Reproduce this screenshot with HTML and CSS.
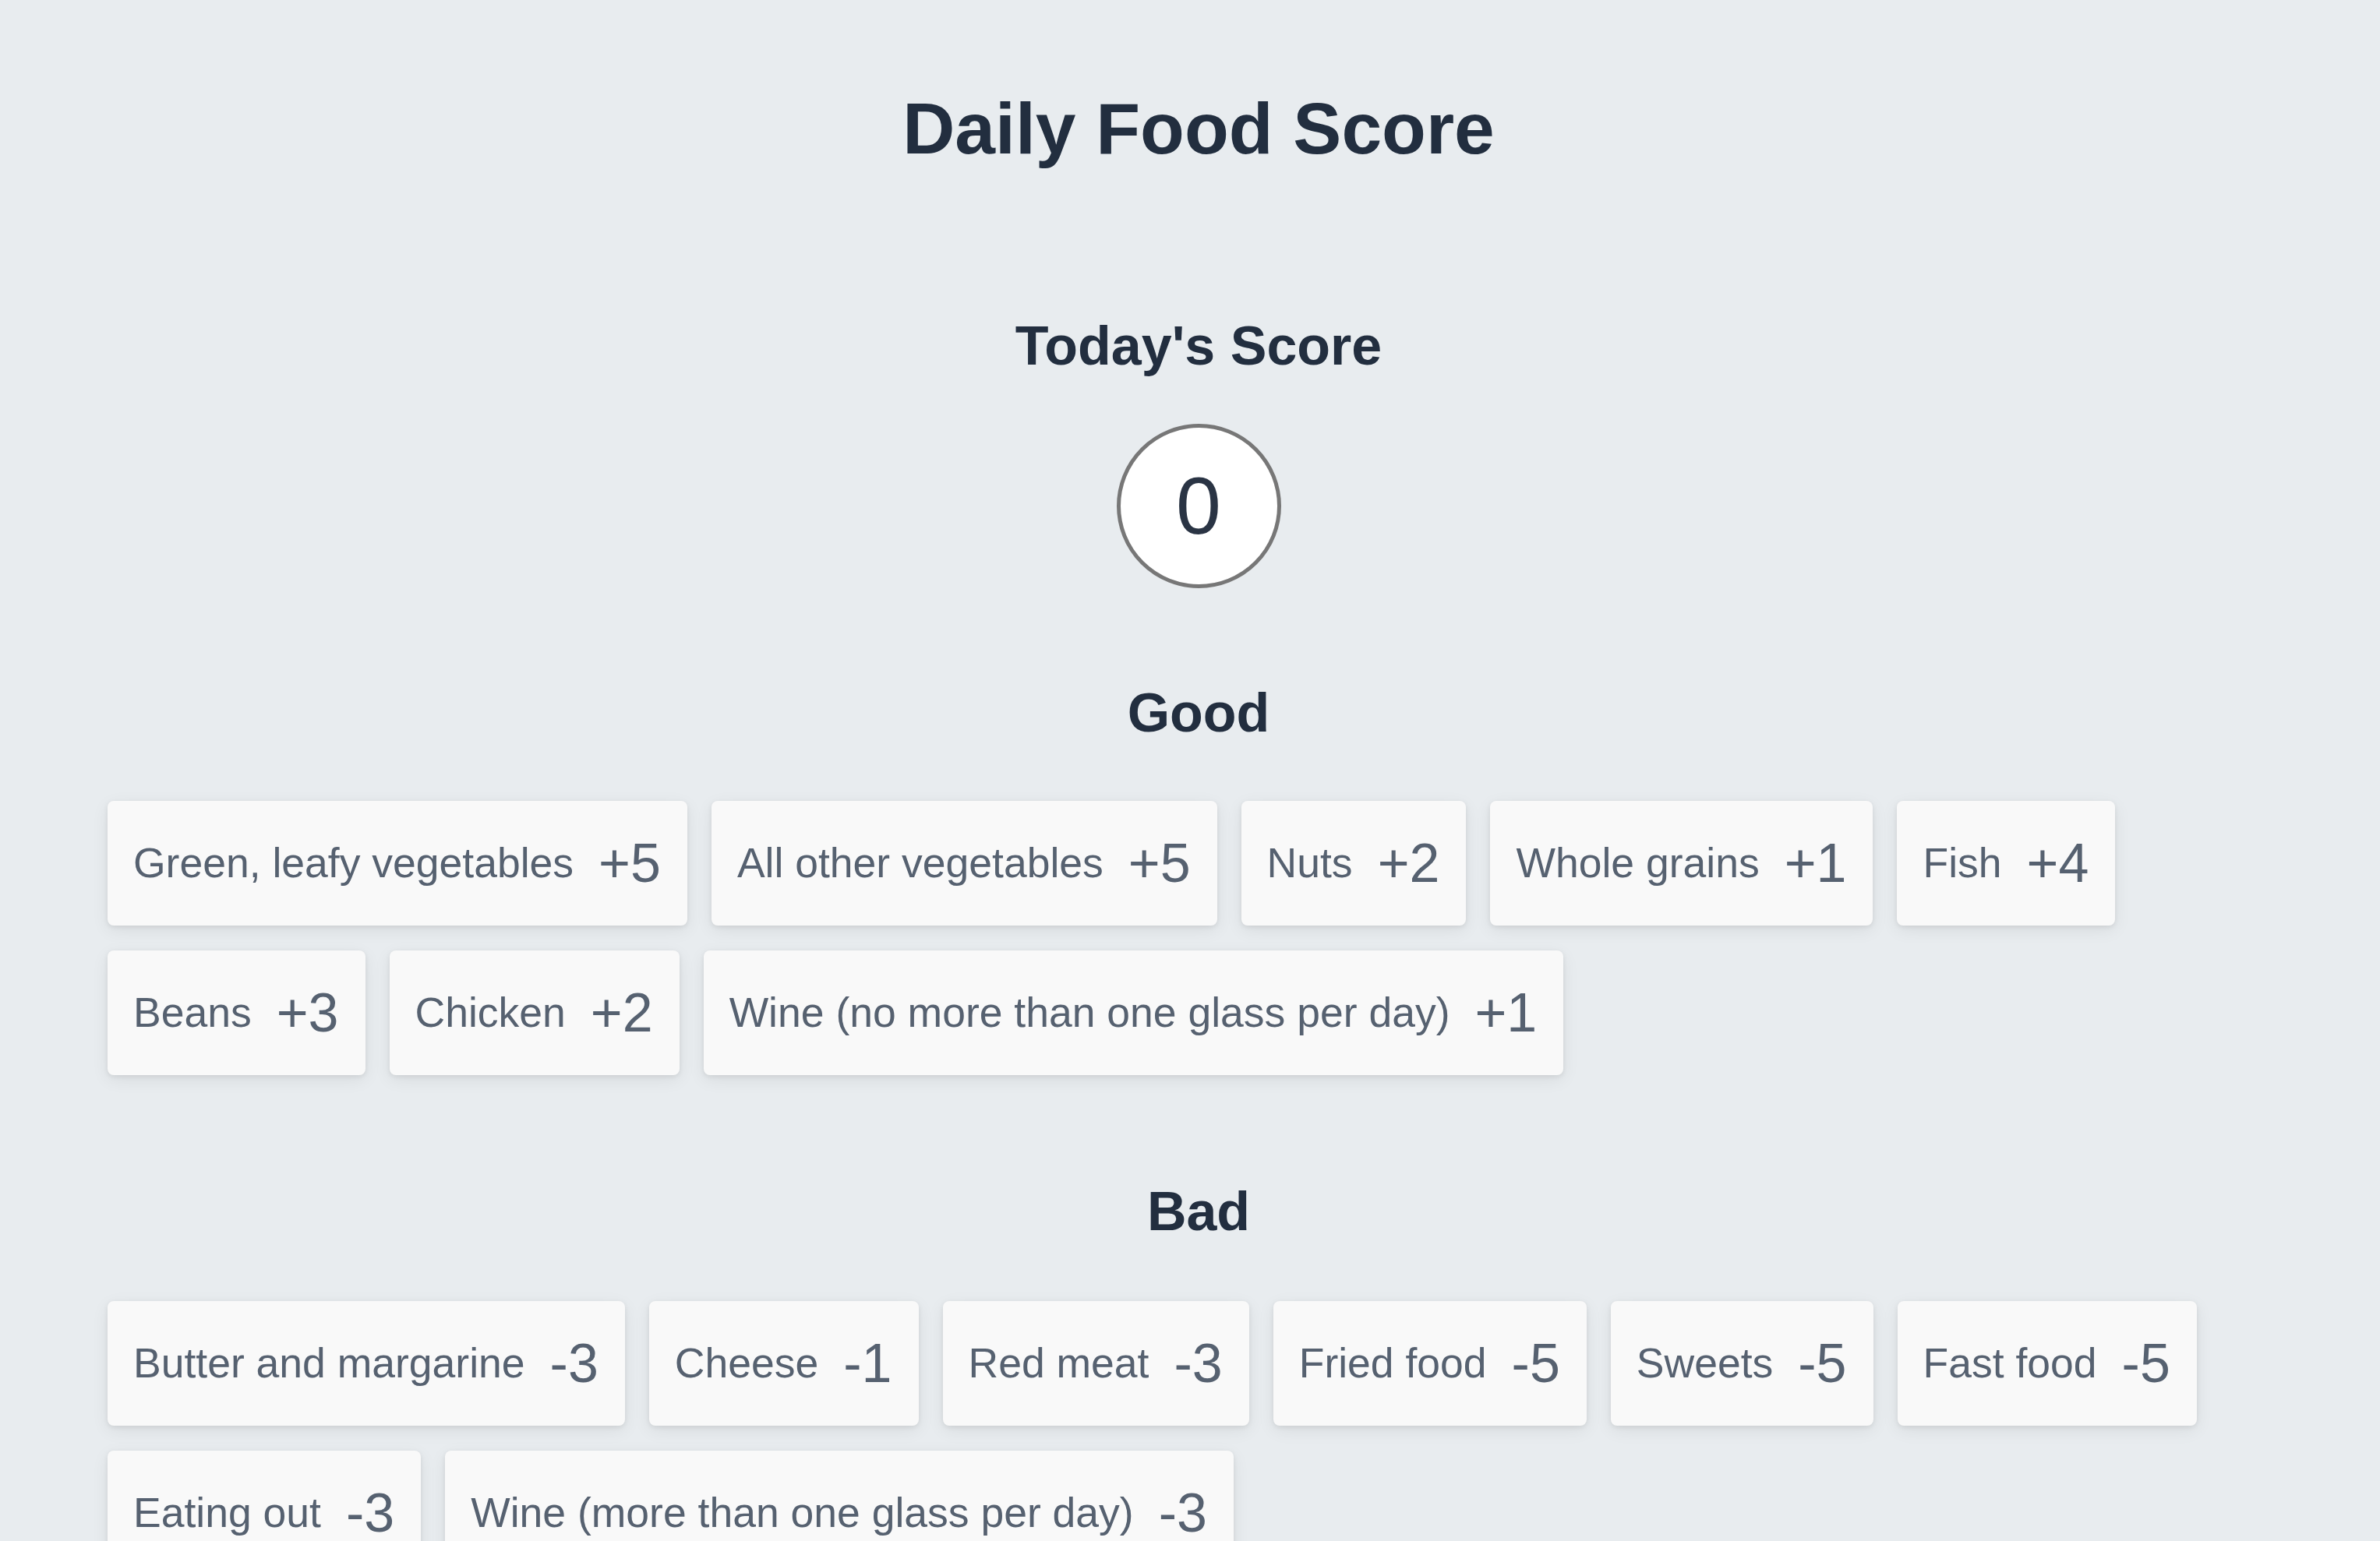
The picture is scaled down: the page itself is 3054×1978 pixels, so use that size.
FILE: index.html
```html
<!DOCTYPE html>
<html lang="en">
<head>
<meta charset="utf-8">
<title>Daily Food Score</title>
<link rel="stylesheet" href="styles.css">
</head>
<body>
<main class="page">
  <h1 class="title">Daily Food Score</h1>

  <h2 class="section-title today">Today's Score</h2>
  <div class="score-circle">0</div>

  <h2 class="section-title good-title">Good</h2>
  <div class="food-list good-list">
    <div class="food-card"><span class="food-name">Green, leafy vegetables</span><span class="food-points">+5</span></div>
    <div class="food-card"><span class="food-name">All other vegetables</span><span class="food-points">+5</span></div>
    <div class="food-card"><span class="food-name">Nuts</span><span class="food-points">+2</span></div>
    <div class="food-card"><span class="food-name">Whole grains</span><span class="food-points">+1</span></div>
    <div class="food-card"><span class="food-name">Fish</span><span class="food-points">+4</span></div>
    <div class="food-card"><span class="food-name">Beans</span><span class="food-points">+3</span></div>
    <div class="food-card"><span class="food-name">Chicken</span><span class="food-points">+2</span></div>
    <div class="food-card"><span class="food-name">Wine (no more than one glass per day)</span><span class="food-points">+1</span></div>
  </div>

  <h2 class="section-title bad-title">Bad</h2>
  <div class="food-list bad-list">
    <div class="food-card"><span class="food-name">Butter and margarine</span><span class="food-points">-3</span></div>
    <div class="food-card"><span class="food-name">Cheese</span><span class="food-points">-1</span></div>
    <div class="food-card"><span class="food-name">Red meat</span><span class="food-points">-3</span></div>
    <div class="food-card"><span class="food-name">Fried food</span><span class="food-points">-5</span></div>
    <div class="food-card"><span class="food-name">Sweets</span><span class="food-points">-5</span></div>
    <div class="food-card"><span class="food-name">Fast food</span><span class="food-points">-5</span></div>
    <div class="food-card"><span class="food-name">Eating out</span><span class="food-points">-3</span></div>
    <div class="food-card"><span class="food-name">Wine (more than one glass per day)</span><span class="food-points">-3</span></div>
  </div>
</main>
</body>
</html>
```

FILE: styles.css
```css
html, body {
  margin: 0;
  padding: 0;
}

body {
  background: #e8ecef;
  font-family: "Liberation Sans", Arial, sans-serif;
  color: #222e3f;
}

.page {
  width: 2800px;
  margin-left: 138px;
  padding-top: 119px;
  padding-bottom: 120px;
  display: flex;
  flex-direction: column;
  align-items: center;
}

.title {
  margin: 0;
  font-size: 93px;
  line-height: 93px;
  font-weight: 700;
  color: #222e3f;
}

.section-title {
  margin: 0;
  font-size: 70px;
  line-height: 70px;
  font-weight: 700;
  color: #222e3f;
}

.today {
  margin-top: 197px;
}

.score-circle {
  margin-top: 65px;
  width: 201px;
  height: 201px;
  box-sizing: content-box;
  border: 5px solid #777777;
  border-radius: 50%;
  background: #ffffff;
  display: flex;
  align-items: center;
  justify-content: center;
  font-size: 104px;
  color: #2a3444;
}

.good-title {
  margin-top: 125px;
}

.bad-title {
  margin-top: 140px;
}

.food-list {
  align-self: stretch;
  display: flex;
  flex-wrap: wrap;
  gap: 32px 31px;
}

.good-list {
  margin-top: 78px;
}

.bad-list {
  margin-top: 80px;
}

.food-card {
  height: 160px;
  box-sizing: border-box;
  padding: 0 34px 0 33px;
  display: flex;
  align-items: center;
  gap: 32px;
  background: #f9f9f9;
  border-radius: 8px;
  box-shadow: 0 2px 6px rgba(0, 0, 0, 0.08), 0 6px 22px rgba(0, 0, 0, 0.07);
  color: #566170;
}

.food-name {
  font-size: 53.5px;
  line-height: 1;
  white-space: nowrap;
}

.food-points {
  font-size: 70px;
  line-height: 1;
  white-space: nowrap;
}
```
